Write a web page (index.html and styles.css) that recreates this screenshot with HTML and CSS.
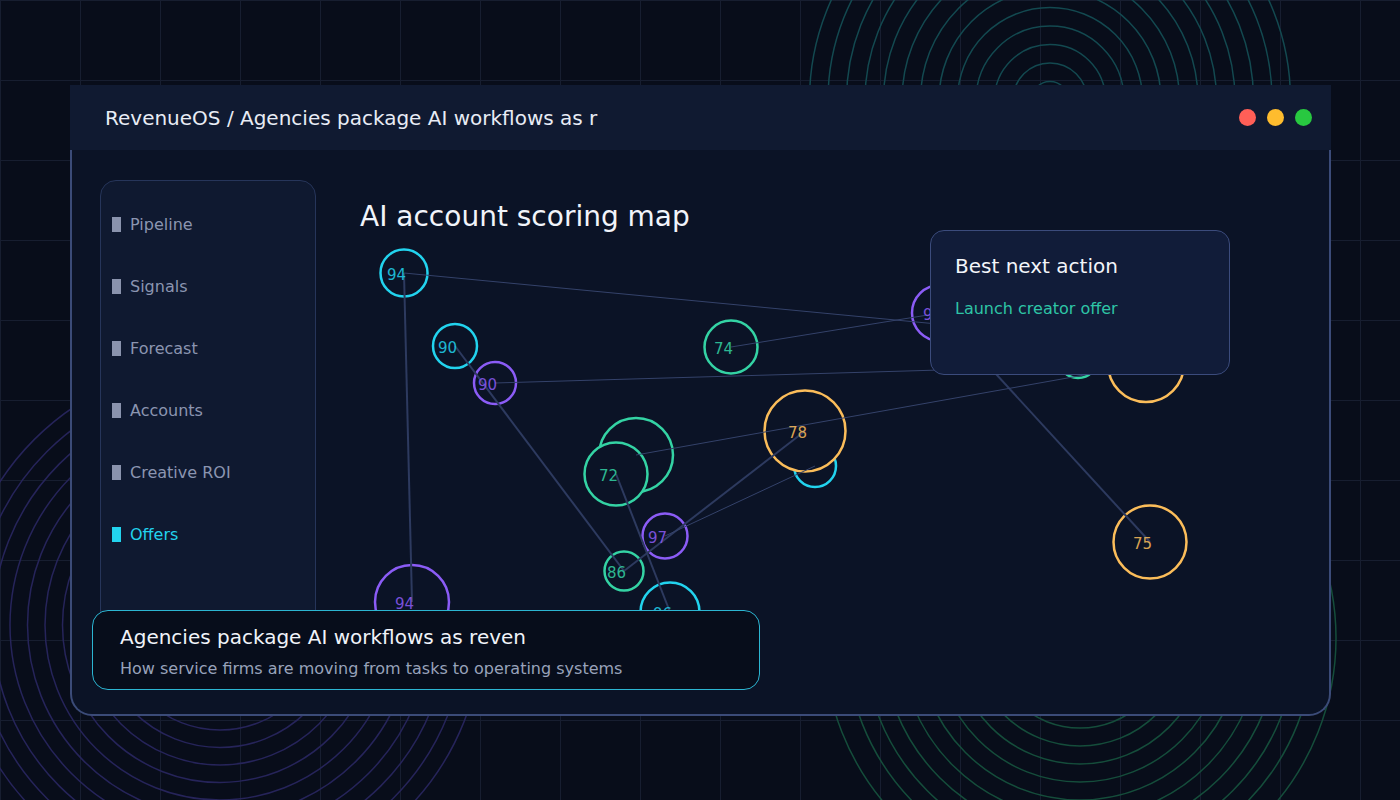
FILE: index.html
```html
<!DOCTYPE html>
<html lang="en">
<head>
    <meta charset="UTF-8">
    <meta name="viewport" content="width=device-width, initial-scale=1.0">
    <title>RevenueOS - AI account scoring map</title>
    <link rel="stylesheet" href="styles.css">
</head>
<body>
    <svg class="rings" width="1400" height="800" viewBox="0 0 1400 800">
        <g class="ring-teal" fill="none">
            <circle cx="1050" cy="100" r="18.5"/><circle cx="1050" cy="100" r="37"/>
            <circle cx="1050" cy="100" r="55.5"/><circle cx="1050" cy="100" r="74"/>
            <circle cx="1050" cy="100" r="92.5"/><circle cx="1050" cy="100" r="111"/>
            <circle cx="1050" cy="100" r="129.5"/><circle cx="1050" cy="100" r="148"/>
            <circle cx="1050" cy="100" r="166.5"/><circle cx="1050" cy="100" r="185"/>
            <circle cx="1050" cy="100" r="203.5"/><circle cx="1050" cy="100" r="222"/>
            <circle cx="1050" cy="100" r="240.5"/>
        </g>
        <g class="ring-green" fill="none">
            <circle cx="1080" cy="638" r="18"/><circle cx="1080" cy="638" r="36"/>
            <circle cx="1080" cy="638" r="54"/><circle cx="1080" cy="638" r="72"/>
            <circle cx="1080" cy="638" r="90"/><circle cx="1080" cy="638" r="108"/>
            <circle cx="1080" cy="638" r="126"/><circle cx="1080" cy="638" r="144"/>
            <circle cx="1080" cy="638" r="162"/><circle cx="1080" cy="638" r="180"/>
            <circle cx="1080" cy="638" r="198"/><circle cx="1080" cy="638" r="216"/>
            <circle cx="1080" cy="638" r="234"/><circle cx="1080" cy="638" r="256"/>
        </g>
        <g class="ring-purple" fill="none">
            <circle cx="220" cy="625" r="17.5"/><circle cx="220" cy="625" r="35"/>
            <circle cx="220" cy="625" r="52.5"/><circle cx="220" cy="625" r="70"/>
            <circle cx="220" cy="625" r="87.5"/><circle cx="220" cy="625" r="105"/>
            <circle cx="220" cy="625" r="122.5"/><circle cx="220" cy="625" r="140"/>
            <circle cx="220" cy="625" r="157.5"/><circle cx="220" cy="625" r="175"/>
            <circle cx="220" cy="625" r="192.5"/><circle cx="220" cy="625" r="210"/>
            <circle cx="220" cy="625" r="227.5"/><circle cx="220" cy="625" r="245"/>
            <circle cx="220" cy="625" r="262.5"/>
        </g>
    </svg>

    <div class="window">
        <div class="titlebar">
            <div class="title">RevenueOS / Agencies package AI workflows as r</div>
            <div class="lights">
                <span class="light red"></span>
                <span class="light yellow"></span>
                <span class="light green"></span>
            </div>
        </div>

        <div class="window-body">
            <svg class="chart" width="1257" height="564" viewBox="72 150 1257 564">
                <g class="nodes">
                    <circle class="n-cyan" cx="404" cy="273" r="23.5"/>
                    <circle class="n-cyan" cx="455" cy="346" r="22"/>
                    <circle class="n-purple" cx="495" cy="383" r="21"/>
                    <circle class="n-green" cx="731" cy="347" r="26.5"/>
                    <circle class="n-green" cx="636" cy="455" r="37"/>
                    <circle class="n-green" cx="616" cy="474" r="31.5"/>
                    <circle class="n-cyan" cx="815" cy="466" r="21"/>
                    <circle class="n-orange" cx="805" cy="431" r="40.5"/>
                    <circle class="n-purple" cx="665" cy="536" r="22.5"/>
                    <circle class="n-green" cx="624" cy="571" r="19.5"/>
                    <circle class="n-cyan" cx="670" cy="612" r="29.5"/>
                    <circle class="n-purple" cx="412" cy="602" r="37"/>
                    <circle class="n-purple" cx="940" cy="313" r="28"/>
                    <circle class="n-green" cx="1078" cy="358" r="20"/>
                    <circle class="n-orange" cx="1146" cy="364" r="38"/>
                    <circle class="n-orange" cx="1150" cy="542" r="36.5"/>
                </g>
                <g class="links">
                    <line class="thin" x1="404" y1="273" x2="1000" y2="330"/>
                    <line x1="404" y1="273" x2="412" y2="602"/>
                    <line x1="455" y1="346" x2="624" y2="571"/>
                    <line class="thin" x1="495" y1="383" x2="1146" y2="364"/>
                    <line class="thin" x1="731" y1="347" x2="940" y2="313"/>
                    <line x1="940" y1="313" x2="1150" y2="542"/>
                    <line class="thin" x1="636" y1="455" x2="1146" y2="364"/>
                    <line x1="616" y1="474" x2="670" y2="612"/>
                    <line x1="624" y1="571" x2="805" y2="431"/>
                    <line class="thin" x1="665" y1="536" x2="815" y2="466"/>
                </g>
                <g class="labels">
                    <text class="t-cyan" x="387" y="280">94</text>
                    <text class="t-cyan" x="438" y="353">90</text>
                    <text class="t-purple" x="478" y="390">90</text>
                    <text class="t-green" x="714" y="354">74</text>
                    <text class="t-green" x="599" y="481">72</text>
                    <text class="t-orange" x="788" y="438">78</text>
                    <text class="t-purple" x="648" y="543">97</text>
                    <text class="t-green" x="607" y="578">86</text>
                    <text class="t-cyan" x="653" y="619">96</text>
                    <text class="t-purple" x="395" y="609">94</text>
                    <text class="t-purple" x="923" y="320">92</text>
                    <text class="t-orange" x="1133" y="549">75</text>
                </g>
            </svg>

            <nav class="sidebar">
                <div class="nav-item"><span class="marker"></span>Pipeline</div>
                <div class="nav-item"><span class="marker"></span>Signals</div>
                <div class="nav-item"><span class="marker"></span>Forecast</div>
                <div class="nav-item"><span class="marker"></span>Accounts</div>
                <div class="nav-item"><span class="marker"></span>Creative ROI</div>
                <div class="nav-item active"><span class="marker"></span>Offers</div>
            </nav>

            <div class="main">
                <h1 class="map-title">AI account scoring map</h1>
            </div>

            <div class="action-card">
                <div class="action-title">Best next action</div>
                <div class="action-text">Launch creator offer</div>
            </div>

            <div class="caption">
                <div class="caption-title">Agencies package AI workflows as reven</div>
                <div class="caption-sub">How service firms are moving from tasks to operating systems</div>
            </div>
        </div>
    </div>
</body>
</html>
```

FILE: styles.css
```css
body {
    margin: 0;
    width: 1400px;
    height: 800px;
    overflow: hidden;
    position: relative;
    background-color: #080d1a;
    background-image:
        linear-gradient(#171e30 1px, transparent 1px),
        linear-gradient(90deg, #171e30 1px, transparent 1px);
    background-size: 80px 80px;
    font-family: "DejaVu Sans", sans-serif;
    color: #e6ebf5;
}
.rings {
    position: absolute;
    left: 0;
    top: 0;
}
.ring-teal {
    stroke: #134950;
    stroke-width: 1.5;
}
.ring-green {
    stroke: #154d3b;
    stroke-width: 1.5;
}
.ring-purple {
    stroke: #26245a;
    stroke-width: 1.5;
}
.window {
    position: relative;
    margin: 85px 0 0 70px;
    width: 1261px;
}
.titlebar {
    height: 65px;
    background-color: #101a31;
    display: flex;
    align-items: center;
    justify-content: space-between;
    padding: 0 19px 0 35px;
    box-sizing: border-box;
}
.title {
    font-size: 20px;
    color: #e8ecf5;
}
.lights {
    display: flex;
    gap: 11px;
}
.light {
    width: 17px;
    height: 17px;
    border-radius: 50%;
}
.red { background-color: #ff5f57; }
.yellow { background-color: #febc2e; }
.green { background-color: #28c840; }
.window-body {
    position: relative;
    height: 566px;
    box-sizing: border-box;
    background-color: #0b1326;
    border: 2px solid #3b4b78;
    border-top: none;
    border-radius: 0 0 22px 22px;
    padding: 30px 28px 28px;
    display: flex;
    gap: 44px;
}
.chart {
    position: absolute;
    left: 0;
    top: 0;
}
.nodes circle {
    fill: #0b1326;
    stroke-width: 2.5;
}
.n-cyan { stroke: #22d3ee; }
.n-purple { stroke: #8b5cf6; }
.n-green { stroke: #34d3a4; }
.n-orange { stroke: #fbbd5a; }
.links line {
    stroke: #2d3a5f;
    stroke-width: 2;
}
.links line.thin {
    stroke: #34426a;
    stroke-width: 1;
}
.labels text {
    font-family: "DejaVu Sans", sans-serif;
    font-size: 15px;
    opacity: 0.85;
}
.t-cyan { fill: #22d3ee; }
.t-purple { fill: #8b5cf6; }
.t-green { fill: #34d3a4; }
.t-orange { fill: #fbbd5a; }
.sidebar {
    position: relative;
    width: 216px;
    box-sizing: border-box;
    background-color: #0f1930;
    border: 1px solid #26355a;
    border-radius: 16px;
    padding: 12px 0 0 11px;
}
.nav-item {
    height: 62px;
    display: flex;
    align-items: center;
    gap: 9px;
    font-size: 16px;
    color: #8b95b0;
}
.marker {
    width: 9px;
    height: 15px;
    background-color: #8a93ad;
}
.nav-item.active {
    color: #22d3ee;
}
.nav-item.active .marker {
    background-color: #22d3ee;
}
.main {
    position: relative;
    flex: 1;
}
.map-title {
    margin: 20px 0 0;
    font-size: 28px;
    line-height: 33px;
    font-weight: normal;
    color: #f1f4fa;
}
.action-card {
    position: absolute;
    left: 858px;
    top: 80px;
    width: 300px;
    height: 145px;
    box-sizing: border-box;
    background-color: #111c39;
    border: 1px solid #3b4b7c;
    border-radius: 14px;
    padding: 23px 24px;
}
.action-title {
    font-size: 20px;
    line-height: 24px;
    color: #f3f5fa;
}
.action-text {
    margin-top: 21px;
    font-size: 16px;
    line-height: 20px;
    color: #2ec4a6;
}
.caption {
    position: absolute;
    left: 20px;
    top: 460px;
    width: 668px;
    height: 80px;
    box-sizing: border-box;
    background-color: #070d1b;
    border: 1px solid #2cb5d2;
    border-radius: 16px;
    padding: 14px 27px;
}
.caption-title {
    font-size: 20px;
    line-height: 24px;
    color: #f0f3f9;
}
.caption-sub {
    margin-top: 10px;
    font-size: 16px;
    line-height: 20px;
    color: #98a2ba;
}
```
